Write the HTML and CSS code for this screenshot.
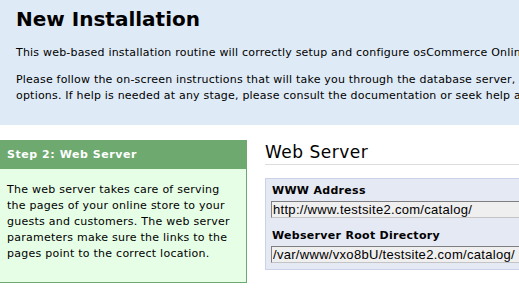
FILE: index.html
```html
<!DOCTYPE html>
<html lang="en">
<head>
    <meta charset="UTF-8">
    <title>osCommerce Installation</title>
    <link rel="stylesheet" href="styles.css">
</head>
<body>
    <div class="intro">
        <h1>New Installation</h1>
        <p>This web-based installation routine will correctly setup and configure osCommerce Online Merchant to run on this server.</p>
        <p>Please follow the on-screen instructions that will take you through the database server,<br>options. If help is needed at any stage, please consult the documentation or seek help at the community support forums.</p>
    </div>

    <div class="main">
        <div class="step">
            <div class="step-title">Step 2: Web Server</div>
            <div class="step-body">
                The web server takes care of serving<br>
                the pages of your online store to your<br>
                guests and customers. The web server<br>
                parameters make sure the links to the<br>
                pages point to the correct location.
            </div>
        </div>

        <div class="content">
            <h2>Web Server</h2>
            <div class="fields">
                <label for="www">WWW Address</label>
                <input type="text" id="www" value="http://www.testsite2.com/catalog/">
                <label for="root">Webserver Root Directory</label>
                <input type="text" id="root" value="/var/www/vxo8bU/testsite2.com/catalog/">
            </div>
        </div>
    </div>
</body>
</html>
```

FILE: styles.css
```css
html, body {
    margin: 0;
    padding: 0;
    overflow: hidden;
}
body {
    font-family: Verdana, "DejaVu Sans", sans-serif;
    font-size: 11px;
    line-height: 16px;
    letter-spacing: 0.2px;
    color: #000;
    background-color: #fff;
    width: 900px;
}
.intro {
    background-color: #deeaf6;
    padding: 7px 16px 21px 16px;
}
h1 {
    font-size: 20px;
    line-height: 24px;
    letter-spacing: 0;
    margin: 0 0 14px 0;
}
.intro p {
    margin: 0 0 11px 0;
    white-space: nowrap;
}
.intro p:last-child {
    margin-bottom: 0;
}
.main {
    display: flex;
    align-items: flex-start;
    margin-top: 15px;
}
.step {
    width: 247px;
    flex: none;
}
.step-title {
    background-color: #6ea96f;
    color: #fff;
    font-weight: bold;
    letter-spacing: 0.55px;
    height: 29px;
    line-height: 29px;
    padding: 0 7px;
}
.step-body {
    background-color: #e6fde6;
    border: 1px solid #6ea96f;
    border-top: 0;
    border-left: 0;
    padding: 13px 7px 20px 7px;
    letter-spacing: 0.25px;
    white-space: nowrap;
}
.content {
    margin-left: 18px;
    flex: 1;
}
h2 {
    font-size: 17px;
    font-weight: normal;
    line-height: 20px;
    letter-spacing: 0.5px;
    margin: 0;
    padding: 2px 0;
    border-bottom: 1px solid #dcdcdc;
}
.fields {
    margin-top: 13px;
    background-color: #e5e9f4;
    border: 1px solid #c9d2e6;
    padding: 4px 5px 6px 5px;
}
.fields label {
    display: block;
    font-weight: bold;
    letter-spacing: 0.3px;
    padding-left: 1px;
    margin-bottom: 2px;
}
.fields input {
    display: block;
    box-sizing: border-box;
    width: 400px;
    height: 17px;
    margin: 0 0 10px 0;
    padding: 0 1px;
    font-family: "Liberation Sans", Arial, sans-serif;
    font-size: 13px;
    letter-spacing: 0.3px;
    background-color: #efefef;
    color: #000;
    border: 1px solid;
    border-color: #7f7f7f #c4c4c4 #c4c4c4 #7f7f7f;
    outline: none;
}
.fields input:last-child {
    margin-bottom: 0;
}
```
